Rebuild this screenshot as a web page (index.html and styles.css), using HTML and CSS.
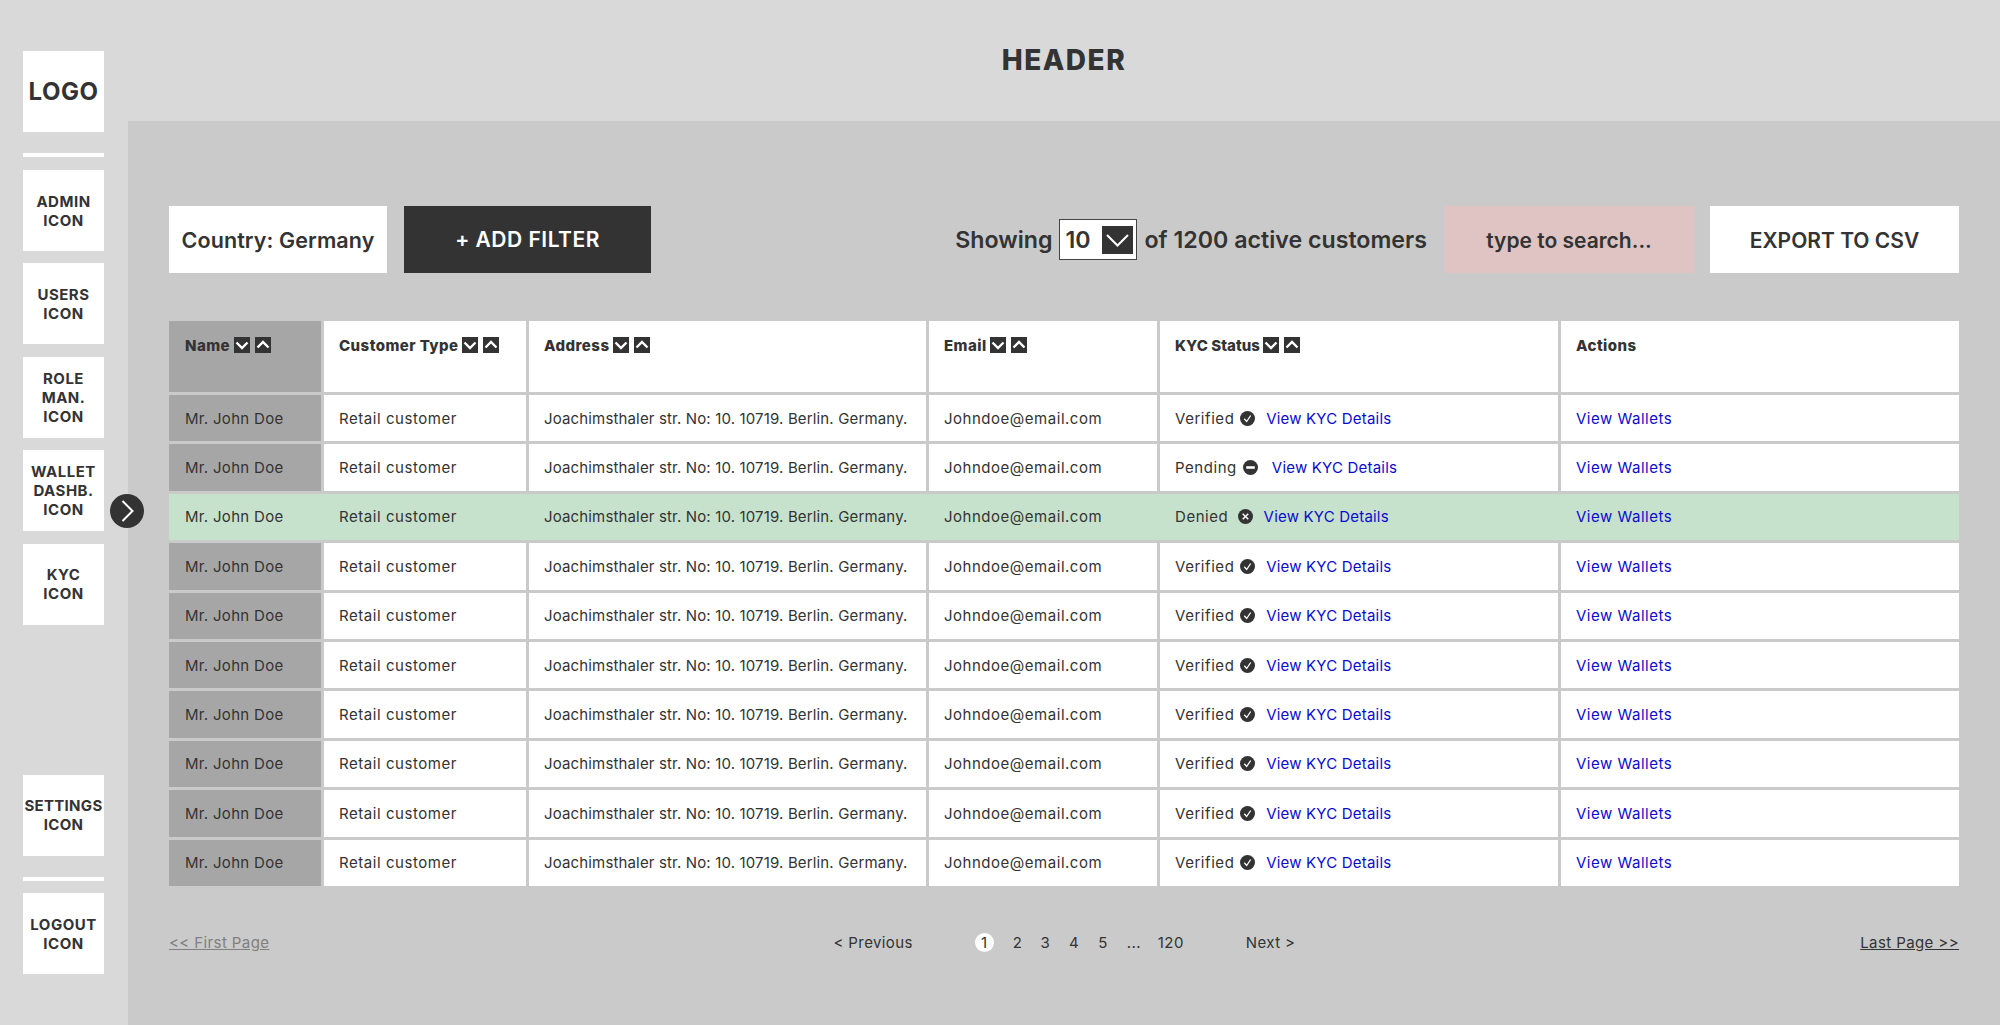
FILE: index.html
```html
<!DOCTYPE html>
<html lang="en">
<head>
  <meta charset="UTF-8">
  <title>Customers</title>
  <link rel="stylesheet" href="styles.css">
</head>
<body>

<svg class="sprites" width="0" height="0">
  <symbol id="sort-down" viewBox="0 0 16 16">
    <rect width="16" height="16" fill="#333"/>
    <path d="M2.500 5.500 8 11l5.500-5.500" fill="none" stroke="#fff" stroke-width="2.400"/>
  </symbol>
  <symbol id="sort-up" viewBox="0 0 16 16">
    <rect width="16" height="16" fill="#333"/>
    <path d="M2.500 10.500 8 5l5.500 5.500" fill="none" stroke="#fff" stroke-width="2.400"/>
  </symbol>
  <symbol id="st-ok" viewBox="0 0 14 14">
    <circle cx="7" cy="7" r="7" fill="#333"/>
    <path d="M4 7.200 6.200 9.800 10 4.200" fill="none" stroke="#fff" stroke-width="1.200"/>
  </symbol>
  <symbol id="st-pending" viewBox="0 0 14 14">
    <circle cx="7" cy="7" r="7" fill="#333"/>
    <rect x="3" y="5.800" width="8" height="2.400" fill="#fff"/>
  </symbol>
  <symbol id="st-denied" viewBox="0 0 14 14">
    <circle cx="7" cy="7" r="7" fill="#333"/>
    <path d="M4.400 4.400 9.600 9.600M9.600 4.400 4.400 9.600" fill="none" stroke="#fff" stroke-width="1.400"/>
  </symbol>
</svg>

<aside class="sidebar">
  <div class="nav-item logo">LOGO</div>
  <div class="nav-sep first-sep"></div>
  <div class="nav-item">ADMIN<br>ICON</div>
  <div class="nav-item">USERS<br>ICON</div>
  <div class="nav-item">ROLE<br>MAN.<br>ICON</div>
  <div class="nav-item">WALLET<br>DASHB.<br>ICON</div>
  <div class="nav-item">KYC<br>ICON</div>
  <div class="nav-item settings">SETTINGS<br>ICON</div>
  <div class="nav-sep last-sep"></div>
  <div class="nav-item">LOGOUT<br>ICON</div>
</aside>

<button class="collapse" type="button">
  <svg width="34" height="34" viewBox="0 0 34 34"><path d="M12.500 7l10 10-10 10" fill="none" stroke="#fff" stroke-width="2"/></svg>
</button>

<div class="page">
  <header class="top-header">HEADER</header>

  <main class="content">
    <div class="toolbar">
      <div class="filter">Country: Germany</div>
      <button class="add-filter" type="button">+ ADD FILTER</button>
      <div class="showing">
        Showing
        <span class="page-size">10
          <svg width="31" height="28" viewBox="0 0 31 28"><rect width="31" height="28" fill="#333"/><path d="M5 9l10.500 10.500L26 9" fill="none" stroke="#fff" stroke-width="2"/></svg>
        </span>
        of 1200 active customers
      </div>
      <div class="search">type to search...</div>
      <button class="export" type="button">EXPORT TO CSV</button>
    </div>

    <div class="table">
      <div class="row head">
        <div class="cell name">Name <svg class="sort"><use href="#sort-down"/></svg><svg class="sort"><use href="#sort-up"/></svg></div>
        <div class="cell">Customer Type <svg class="sort"><use href="#sort-down"/></svg><svg class="sort"><use href="#sort-up"/></svg></div>
        <div class="cell">Address <svg class="sort"><use href="#sort-down"/></svg><svg class="sort"><use href="#sort-up"/></svg></div>
        <div class="cell">Email <svg class="sort"><use href="#sort-down"/></svg><svg class="sort"><use href="#sort-up"/></svg></div>
        <div class="cell head-kyc">KYC Status <svg class="sort"><use href="#sort-down"/></svg><svg class="sort"><use href="#sort-up"/></svg></div>
        <div class="cell">Actions</div>
      </div>

      <div class="row">
        <div class="cell name">Mr. John Doe</div>
        <div class="cell type">Retail customer</div>
        <div class="cell addr">Joachimsthaler str. No: 10. 10719. Berlin. Germany.</div>
        <div class="cell mail">Johndoe@email.com</div>
        <div class="cell kyc verified">Verified <svg class="st"><use href="#st-ok"/></svg><a href="#">View KYC Details</a></div>
        <div class="cell wallets"><a href="#">View Wallets</a></div>
      </div>
      <div class="row">
        <div class="cell name">Mr. John Doe</div>
        <div class="cell type">Retail customer</div>
        <div class="cell addr">Joachimsthaler str. No: 10. 10719. Berlin. Germany.</div>
        <div class="cell mail">Johndoe@email.com</div>
        <div class="cell kyc pending">Pending <svg class="st"><use href="#st-pending"/></svg><a href="#">View KYC Details</a></div>
        <div class="cell wallets"><a href="#">View Wallets</a></div>
      </div>
      <div class="row selected">
        <div class="cell name">Mr. John Doe</div>
        <div class="cell type">Retail customer</div>
        <div class="cell addr">Joachimsthaler str. No: 10. 10719. Berlin. Germany.</div>
        <div class="cell mail">Johndoe@email.com</div>
        <div class="cell kyc denied">Denied <svg class="st"><use href="#st-denied"/></svg><a href="#">View KYC Details</a></div>
        <div class="cell wallets"><a href="#">View Wallets</a></div>
      </div>
      <div class="row">
        <div class="cell name">Mr. John Doe</div>
        <div class="cell type">Retail customer</div>
        <div class="cell addr">Joachimsthaler str. No: 10. 10719. Berlin. Germany.</div>
        <div class="cell mail">Johndoe@email.com</div>
        <div class="cell kyc verified">Verified <svg class="st"><use href="#st-ok"/></svg><a href="#">View KYC Details</a></div>
        <div class="cell wallets"><a href="#">View Wallets</a></div>
      </div>
      <div class="row">
        <div class="cell name">Mr. John Doe</div>
        <div class="cell type">Retail customer</div>
        <div class="cell addr">Joachimsthaler str. No: 10. 10719. Berlin. Germany.</div>
        <div class="cell mail">Johndoe@email.com</div>
        <div class="cell kyc verified">Verified <svg class="st"><use href="#st-ok"/></svg><a href="#">View KYC Details</a></div>
        <div class="cell wallets"><a href="#">View Wallets</a></div>
      </div>
      <div class="row">
        <div class="cell name">Mr. John Doe</div>
        <div class="cell type">Retail customer</div>
        <div class="cell addr">Joachimsthaler str. No: 10. 10719. Berlin. Germany.</div>
        <div class="cell mail">Johndoe@email.com</div>
        <div class="cell kyc verified">Verified <svg class="st"><use href="#st-ok"/></svg><a href="#">View KYC Details</a></div>
        <div class="cell wallets"><a href="#">View Wallets</a></div>
      </div>
      <div class="row">
        <div class="cell name">Mr. John Doe</div>
        <div class="cell type">Retail customer</div>
        <div class="cell addr">Joachimsthaler str. No: 10. 10719. Berlin. Germany.</div>
        <div class="cell mail">Johndoe@email.com</div>
        <div class="cell kyc verified">Verified <svg class="st"><use href="#st-ok"/></svg><a href="#">View KYC Details</a></div>
        <div class="cell wallets"><a href="#">View Wallets</a></div>
      </div>
      <div class="row">
        <div class="cell name">Mr. John Doe</div>
        <div class="cell type">Retail customer</div>
        <div class="cell addr">Joachimsthaler str. No: 10. 10719. Berlin. Germany.</div>
        <div class="cell mail">Johndoe@email.com</div>
        <div class="cell kyc verified">Verified <svg class="st"><use href="#st-ok"/></svg><a href="#">View KYC Details</a></div>
        <div class="cell wallets"><a href="#">View Wallets</a></div>
      </div>
      <div class="row">
        <div class="cell name">Mr. John Doe</div>
        <div class="cell type">Retail customer</div>
        <div class="cell addr">Joachimsthaler str. No: 10. 10719. Berlin. Germany.</div>
        <div class="cell mail">Johndoe@email.com</div>
        <div class="cell kyc verified">Verified <svg class="st"><use href="#st-ok"/></svg><a href="#">View KYC Details</a></div>
        <div class="cell wallets"><a href="#">View Wallets</a></div>
      </div>
      <div class="row">
        <div class="cell name">Mr. John Doe</div>
        <div class="cell type">Retail customer</div>
        <div class="cell addr">Joachimsthaler str. No: 10. 10719. Berlin. Germany.</div>
        <div class="cell mail">Johndoe@email.com</div>
        <div class="cell kyc verified">Verified <svg class="st"><use href="#st-ok"/></svg><a href="#">View KYC Details</a></div>
        <div class="cell wallets"><a href="#">View Wallets</a></div>
      </div>
    </div>

    <nav class="pager">
      <a class="first" href="#">&lt;&lt; First Page</a>
      <a class="prev" href="#">&lt; Previous</a>
      <div class="pages">
        <span class="current">1</span>
        <span class="p2">2</span>
        <span class="p3">3</span>
        <span class="p4">4</span>
        <span class="p5">5</span>
        <span class="dots">...</span>
        <span class="p120">120</span>
      </div>
      <a class="next" href="#">Next &gt;</a>
      <a class="last" href="#">Last Page &gt;&gt;</a>
    </nav>
  </main>
</div>

</body>
</html>
```

FILE: styles.css
```css
html, body {
  margin: 0;
  height: 100%;
}

body {
  display: flex;
  height: 1025px;
  overflow: hidden;
  font-family: 'Inter', 'Liberation Sans', sans-serif;
  color: #333;
  background: #d9d9d9;
}

a {
  color: #0b0bd0;
  text-decoration: none;
}

button {
  font-family: inherit;
  border: 0;
  padding: 0;
}

.sprites {
  position: absolute;
}

/* left nav */
.sidebar {
  width: 128px;
  flex: none;
  box-sizing: border-box;
  padding: 51px 0 51px 23px;
  display: flex;
  flex-direction: column;
}

.nav-item {
  width: 81px;
  height: 81px;
  flex: none;
  margin-bottom: 12.4px;
  background: #fff;
  display: flex;
  align-items: center;
  justify-content: center;
  text-align: center;
  font-size: 15px;
  line-height: 19px;
  font-weight: 700;
  letter-spacing: .5px;
}

.nav-item:last-child {
  margin-bottom: 0;
}

.logo {
  font-size: 24px;
  margin-bottom: 0;
}

.nav-sep {
  width: 81px;
  height: 4px;
  flex: none;
  background: #fff;
}

.first-sep {
  margin: 21px 0 13px;
}

.last-sep {
  margin: 9px 0 12px;
}

.settings {
  margin-top: auto;
  letter-spacing: .3px;
}

.collapse {
  position: absolute;
  left: 110px;
  top: 494px;
  width: 34px;
  height: 34px;
  border-radius: 50%;
  background: #333;
  display: block;
}

.collapse svg {
  display: block;
}

/* main column */
.page {
  flex: 1;
  display: flex;
  flex-direction: column;
  min-width: 0;
}

.top-header {
  height: 120px;
  padding-bottom: 1px;
  flex: none;
  display: flex;
  align-items: center;
  justify-content: center;
  font-size: 28px;
  font-weight: 800;
  letter-spacing: 1.5px;
}

.content {
  flex: 1;
  background: #cacaca;
  padding: 85px 41px 0 41px;
}

.toolbar {
  display: flex;
  align-items: center;
  height: 67px;
  font-size: 21.500px;
  font-weight: 600;
}

.filter {
  width: 218px;
  height: 67px;
  background: #fff;
  display: flex;
  align-items: center;
  justify-content: center;
  letter-spacing: .1px;
}

.add-filter {
  width: 247px;
  height: 67px;
  margin-left: 17px;
  background: #333;
  color: #fff;
  font-size: 21px;
  font-weight: 600;
  letter-spacing: .5px;
}

.showing {
  margin-left: auto;
  display: flex;
  align-items: center;
  gap: 7px;
  font-size: 23.200px;
}

.page-size {
  width: 78px;
  height: 41px;
  box-sizing: border-box;
  border: 1px solid #444;
  background: #fff;
  display: flex;
  align-items: center;
  justify-content: space-between;
  padding: 0 3px 0 5px;
}

.search {
  width: 250px;
  height: 66px;
  padding-top: 1px;
  margin-left: 17px;
  background: #e0c4c4;
  display: flex;
  align-items: center;
  justify-content: center;
  font-size: 21px;
}

.export {
  width: 249px;
  height: 67px;
  padding-top: 1px;
  margin-left: 16px;
  background: #fff;
  color: #333;
  font-size: 21px;
  font-weight: 600;
}

/* customers table */
.table {
  margin-top: 48px;
  display: flex;
  flex-direction: column;
  gap: 3px;
  font-size: 15px;
}

.row {
  display: grid;
  grid-template-columns: 152px 202px 397px 228px 398px 1fr;
  column-gap: 3px;
  height: 46.4px;
}

.cell {
  background: #fff;
  padding-left: 15px;
  display: flex;
  align-items: center;
  letter-spacing: .3px;
}

.name {
  background: #a6a6a6;
  padding-left: 16px;
}

.type { letter-spacing: .55px; }
.addr { letter-spacing: .15px; }
.mail { letter-spacing: .52px; }
.wallets { letter-spacing: .5px; }

.head {
  height: 71px;
}

.head .cell {
  align-items: flex-start;
  padding-top: 15px;
  font-weight: 800;
  letter-spacing: .45px;
  box-sizing: border-box;
  white-space: pre;
}

.head .head-kyc {
  letter-spacing: .05px;
}

.sort {
  width: 16px;
  height: 16px;
  flex: none;
  margin: 1px 5px 0 0;
}

.selected {
  background: #c6e2cd;
}

.selected .cell {
  background: transparent;
}

.st {
  width: 15px;
  height: 15px;
  flex: none;
}

.kyc {
  white-space: pre;
  letter-spacing: .55px;
}

.kyc a {
  letter-spacing: .2px;
}

.verified .st { margin: 0 11.500px 0 .5px; }
.pending .st { margin: 0 13.750px 0 1.500px; }
.denied .st { margin: 0 11px 0 4.500px; }

/* pager */
.pager {
  position: relative;
  display: flex;
  align-items: center;
  margin-top: 47px;
  height: 20px;
  font-size: 15px;
  letter-spacing: .4px;
}

.pager a {
  color: #333;
}

.first, .last {
  text-decoration: underline;
}

.pager .first {
  color: #808080;
}

.prev {
  margin-left: 564px;
}

.pages {
  display: flex;
  align-items: center;
  margin-left: 62px;
}

.pages span {
  display: flex;
  align-items: center;
  justify-content: center;
}

.current {
  width: 19px;
  height: 19px;
  border-radius: 50%;
  background: #fff;
}

.p2 { margin-left: 19px; }
.p3 { margin-left: 18px; }
.p4 { margin-left: 19px; }
.p5 { margin-left: 19px; }
.dots { margin-left: 19px; }
.p120 { margin-left: 17px; }

.next {
  margin-left: 62px;
}

.last {
  margin-left: auto;
}
```
